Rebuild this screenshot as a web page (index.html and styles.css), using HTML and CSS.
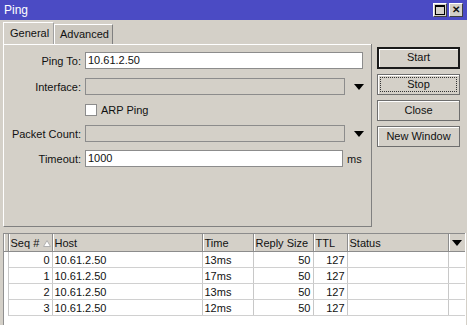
FILE: index.html
```html
<!DOCTYPE html>
<html lang="en">
<head>
    <meta charset="UTF-8">
    <title>Ping</title>
    <link rel="stylesheet" href="styles.css">
</head>
<body>
    <div class="titlebar">
        <span class="title">Ping</span>
        <div class="win-buttons">
            <span class="win-btn"><span class="max-icon"></span></span>
            <span class="win-btn close">&#x2715;</span>
        </div>
    </div>

    <div class="main">
        <div class="left">
            <div class="tabs">
                <span class="tab active">General</span>
                <span class="tab">Advanced</span>
            </div>
            <div class="panel">
                <div class="row first">
                    <label class="lbl">Ping To:</label>
                    <div class="field white wide">10.61.2.50</div>
                </div>
                <div class="row">
                    <label class="lbl">Interface:</label>
                    <div class="field grey mid"></div>
                    <span class="arrow"></span>
                </div>
                <div class="row arp">
                    <span class="lbl"></span>
                    <span class="check"></span>
                    <span class="check-text">ARP Ping</span>
                </div>
                <div class="row">
                    <label class="lbl">Packet Count:</label>
                    <div class="field grey mid"></div>
                    <span class="arrow"></span>
                </div>
                <div class="row">
                    <label class="lbl">Timeout:</label>
                    <div class="field white short">1000</div>
                    <span class="unit">ms</span>
                </div>
            </div>
        </div>

        <div class="buttons">
            <div class="btn default">Start</div>
            <div class="btn focus"><span>Stop</span></div>
            <div class="btn">Close</div>
            <div class="btn">New Window</div>
        </div>
    </div>

    <div class="list">
        <table>
            <colgroup>
                <col style="width:4px">
                <col style="width:44px">
                <col style="width:150px">
                <col style="width:51px">
                <col style="width:60px">
                <col style="width:34px">
                <col style="width:101px">
                <col style="width:17px">
            </colgroup>
            <thead>
                <tr>
                    <th></th>
                    <th>Seq # <svg class="sort" width="8" height="7" viewBox="0 0 8 7"><polygon points="4,0.5 7.5,6.5 0.5,6.5" fill="#fff" stroke="#b0b0b0"/></svg></th>
                    <th>Host</th>
                    <th>Time</th>
                    <th>Reply Size</th>
                    <th>TTL</th>
                    <th>Status</th>
                    <th class="menu"><span class="arrow small"></span></th>
                </tr>
            </thead>
            <tbody>
                <tr><td></td><td class="num">0</td><td>10.61.2.50</td><td>13ms</td><td class="num">50</td><td class="num">127</td><td></td><td></td></tr>
                <tr><td></td><td class="num">1</td><td>10.61.2.50</td><td>17ms</td><td class="num">50</td><td class="num">127</td><td></td><td></td></tr>
                <tr><td></td><td class="num">2</td><td>10.61.2.50</td><td>13ms</td><td class="num">50</td><td class="num">127</td><td></td><td></td></tr>
                <tr><td></td><td class="num">3</td><td>10.61.2.50</td><td>12ms</td><td class="num">50</td><td class="num">127</td><td></td><td></td></tr>
            </tbody>
        </table>
    </div>
</body>
</html>
```

FILE: styles.css
```css
html, body {
    margin: 0;
    padding: 0;
    width: 467px;
    height: 325px;
    overflow: hidden;
    background: #d4d0c8;
    font-family: 'Liberation Sans', Arial, sans-serif;
    font-size: 11px;
    color: #111;
}

.titlebar {
    height: 20px;
    background: #4b4bc4;
    display: flex;
    align-items: center;
    justify-content: space-between;
    padding: 0 4px 0 4px;
}

.title {
    color: #fff;
    font-size: 12px;
}

.win-buttons {
    display: flex;
    gap: 2px;
}

.win-btn {
    width: 14px;
    height: 14px;
    box-sizing: border-box;
    background: #d4d0c8;
    border: 1px solid;
    border-color: #fff #404040 #404040 #fff;
    display: flex;
    align-items: center;
    justify-content: center;
}

.max-icon {
    width: 8px;
    height: 7px;
    border: 1px solid #000;
    border-top-width: 2px;
}

.win-btn.close {
    font-size: 10px;
    font-weight: bold;
    line-height: 1;
}

.main {
    display: flex;
    padding: 2px 0 0 3px;
}

.left {
    width: 369px;
}

.tabs {
    display: flex;
    align-items: flex-end;
    height: 22px;
}

.tab {
    box-sizing: border-box;
    height: 20px;
    padding: 0 5px;
    line-height: 19px;
    background: #cbc7bf;
    border: 1px solid;
    border-color: #fff #808080 transparent #fff;
    border-bottom: none;
}

.tab.active {
    height: 22px;
    line-height: 21px;
    padding: 0 6px;
    background: #d4d0c8;
    width: 51px;
    border-right-color: #a0a0a0;
}

.tab + .tab {
    width: 59px;
}

.panel {
    box-sizing: border-box;
    height: 183px;
    border: 1px solid;
    border-color: #fff #808080 #808080 #fff;
    border-top: none;
    box-shadow: inset 0 1px 0 #fff;
    padding-top: 8px;
}

.row {
    display: flex;
    align-items: center;
    height: 17px;
    margin-bottom: 8px;
}

.row.first {
    margin-bottom: 9px;
}

.row.arp {
    height: 14px;
}

.lbl {
    width: 77px;
    text-align: right;
    padding-right: 4px;
}

.field {
    box-sizing: border-box;
    height: 17px;
    border: 1px solid #8c8c8c;
    padding: 0 2px;
    line-height: 15px;
}

.field.white {
    background: #fff;
}

.field.grey {
    background: #d4d0c8;
}

.field.wide {
    width: 278px;
}

.field.mid {
    width: 260px;
}

.field.short {
    width: 258px;
}

.arrow {
    display: inline-block;
    width: 0;
    height: 0;
    margin-left: 9px;
    border-left: 5px solid transparent;
    border-right: 5px solid transparent;
    border-top: 6px solid #000;
}

.arrow.small {
    margin: 0;
    vertical-align: middle;
}

.check {
    width: 12px;
    height: 12px;
    box-sizing: border-box;
    background: #fff;
    border: 1px solid #8c8c8c;
}

.check-text {
    margin-left: 4px;
}

.unit {
    margin-left: 4px;
}

.buttons {
    margin-left: 5px;
    margin-top: 25px;
    width: 83px;
    display: flex;
    flex-direction: column;
    gap: 5px;
}

.btn {
    box-sizing: border-box;
    height: 21px;
    border: 1px solid #6e6e6e;
    box-shadow: inset 1px 1px 0 #fff;
    text-align: center;
    line-height: 19px;
}

.btn.default {
    border: 2px solid #1a1a1a;
    line-height: 17px;
    height: 22px;
}

.btn.focus span {
    display: block;
    margin: 2px;
    border: 1px dotted #333;
    line-height: 13px;
}

.list {
    margin: 6px 0 0 3px;
    width: 462px;
    height: 100px;
    background: #fff;
    border-left: 1px solid #909090;
}

table {
    border-collapse: collapse;
    table-layout: fixed;
    width: 461px;
}

th {
    height: 18px;
    box-sizing: border-box;
    background: #d4d0c8;
    font-weight: normal;
    text-align: left;
    padding: 0 2px;
    border-right: 1px solid #8c8c8c;
    border-top: 1px solid #8c8c8c;
    border-bottom: 1px solid #8c8c8c;
    box-shadow: inset 1px 0 0 #fff;
    white-space: nowrap;
    overflow: hidden;
    vertical-align: middle;
}

th.menu {
    text-align: center;
    padding: 0;
    border-right: none;
    line-height: 0;
}

.sort {
    margin-left: 1px;
}

td {
    height: 15px;
    padding: 0 2px;
    border-right: 1px solid #c8c8c8;
    border-bottom: 1px solid #d0d0d0;
    white-space: nowrap;
    overflow: hidden;
}

td:first-child {
    border-bottom: none;
}

td:last-child {
    border-right: none;
}

td.num {
    text-align: right;
}
```
